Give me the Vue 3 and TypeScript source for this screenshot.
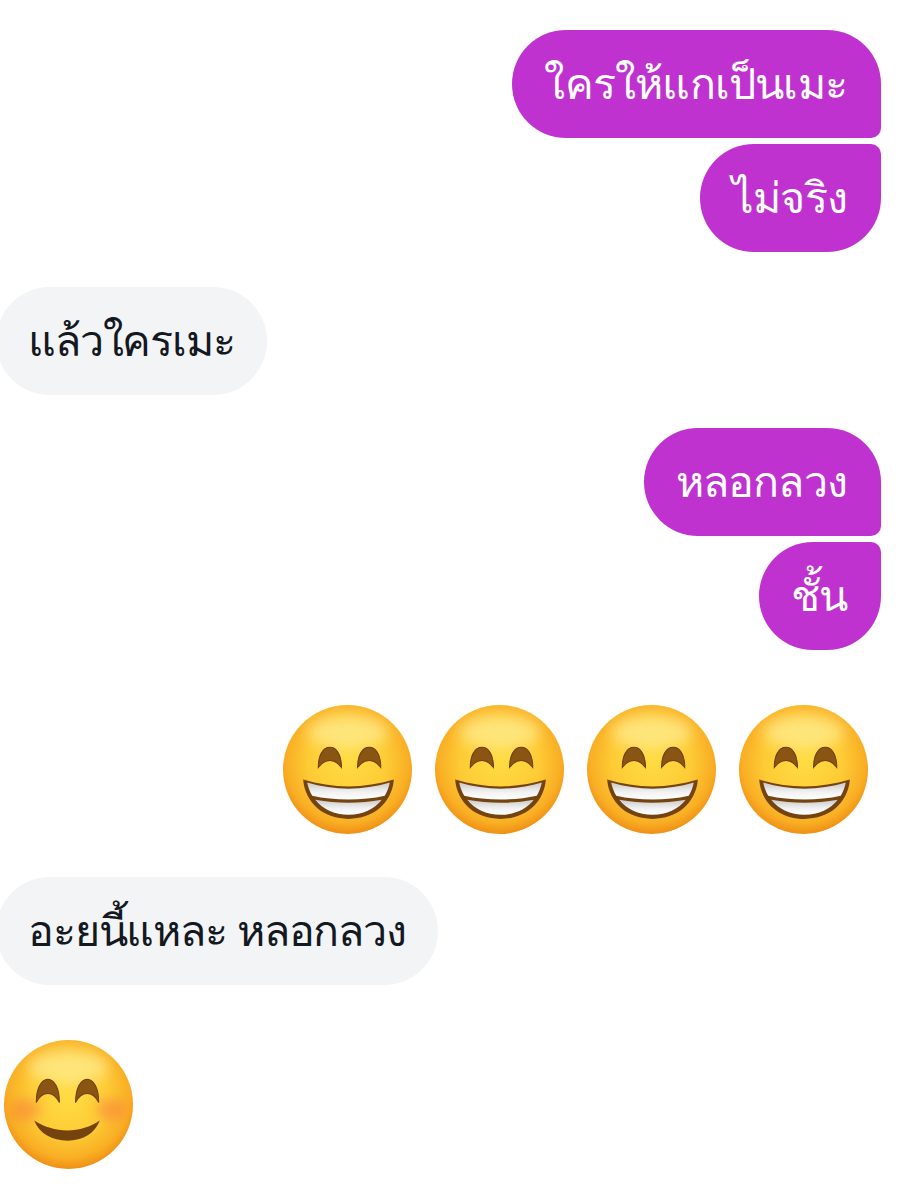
<script setup lang="ts">
type Row =
  | { kind: 'text'; side: 'me' | 'them'; text: string; shape?: 'first' | 'last' }
  | { kind: 'emoji'; side: 'me' | 'them'; face: 'grin' | 'smile'; count: number }

const rows: Row[] = [
  { kind: 'text', side: 'me', text: 'ใครให้แกเป็นเมะ', shape: 'first' },
  { kind: 'text', side: 'me', text: 'ไม่จริง', shape: 'last' },
  { kind: 'text', side: 'them', text: 'แล้วใครเมะ' },
  { kind: 'text', side: 'me', text: 'หลอกลวง', shape: 'first' },
  { kind: 'text', side: 'me', text: 'ชั้น', shape: 'last' },
  { kind: 'emoji', side: 'me', face: 'grin', count: 4 },
  { kind: 'text', side: 'them', text: 'อะยนี้แหละ หลอกลวง' },
  { kind: 'emoji', side: 'them', face: 'smile', count: 1 },
]
</script>

<template>
  <div class="chat">
    <div v-for="(row, i) in rows" :key="i" class="row" :class="row.side">
      <div v-if="row.kind === 'text'" class="bubble" :class="row.shape">{{ row.text }}</div>
      <template v-else>
        <svg v-for="n in row.count" :key="n" class="face" viewBox="0 0 130 130">
          <defs>
            <radialGradient :id="`skin-${i}-${n}`" cx="50%" cy="44%" r="56%">
              <stop offset="0" stop-color="#ffdc42" />
              <stop offset="0.55" stop-color="#fdcb35" />
              <stop offset="0.85" stop-color="#f9ae24" />
              <stop offset="1" stop-color="#ef8f16" />
            </radialGradient>
            <linearGradient :id="`tooth-${i}-${n}`" x1="0" y1="0" x2="0" y2="1">
              <stop offset="0" stop-color="#c9c9c9" />
              <stop offset="0.55" stop-color="#f1f1f1" />
              <stop offset="1" stop-color="#ffffff" />
            </linearGradient>
          </defs>
          <circle cx="65" cy="65" r="64" :fill="`url(#skin-${i}-${n})`" />
          <ellipse class="shine" cx="65" cy="28" rx="40" ry="17" />
          <template v-if="row.face === 'grin'">
            <path class="eye" d="M36 63C36 50 41 43 47.5 43S59 50 59 63C56 59 52 56 47.5 56S39 59 36 63Z" />
            <path class="eye" d="M75 63C75 50 80 43 86.5 43S98 50 98 63C95 59 91 56 86.5 56S78 59 75 63Z" />
            <path class="mouth" d="M21 75C50 84 82 84 111 75C109 99 90 114 66 114S23 99 21 75Z" />
            <path :fill="`url(#tooth-${i}-${n})`" d="M25 78C52 86 80 86 107 78C106 83 104 88 102 91C80 96 52 96 30 91C28 88 26 83 25 78Z" />
            <path :fill="`url(#tooth-${i}-${n})`" d="M33 95C55 99 77 99 99 95C92 104 80 110 66 110S40 104 33 95Z" />
          </template>
          <template v-else>
            <ellipse class="blush" cx="22" cy="70" rx="15" ry="11" />
            <ellipse class="blush" cx="108" cy="70" rx="15" ry="11" />
            <path class="eye" d="M33 63C33 49 38 40 44.5 40S56 49 56 63C53 57 49 54 44.5 54S36 57 33 63Z" />
            <path class="eye" d="M72 63C72 49 77 40 83.5 40S95 49 95 63C92 57 88 54 83.5 54S75 57 72 63Z" />
            <path class="mouth" d="M31 81C50 94 78 94 96 81C91 94 79 101 64 101S36 94 31 81Z" />
          </template>
        </svg>
      </template>
    </div>
  </div>
</template>

<style scoped>
.chat {
  width: 903px;
  height: 1200px;
  box-sizing: border-box;
  padding: 30px 22px 0 0;
  display: flex;
  flex-direction: column;
  overflow: hidden;
  background: #fff;
  font-family: "Noto Sans", "DejaVu Sans", sans-serif;
}

.row {
  display: flex;
}

.me {
  justify-content: flex-end;
}

.row:nth-child(2),
.row:nth-child(5) {
  margin-top: 6px;
}

.row:nth-child(3) {
  margin-top: 35px;
}

.row:nth-child(4) {
  margin-top: 33px;
}

.row:nth-child(6) {
  margin-top: 54px;
  padding-right: 12px;
  gap: 21px;
}

.row:nth-child(7) {
  margin-top: 42px;
}

.row:nth-child(8) {
  margin-top: 54px;
  padding-left: 3px;
}

.bubble {
  height: 108px;
  box-sizing: border-box;
  display: flex;
  align-items: center;
  padding: 0 34px 0 32px;
  border-radius: 54px;
  font-size: 43px;
  letter-spacing: -0.8px;
  white-space: nowrap;
}

.me .bubble {
  background: #c032d0;
  color: #fff;
}

.them .bubble {
  margin-left: -4px;
  padding: 0 32px;
  background: #f3f4f6;
  color: #14181f;
  font-weight: 500;
  letter-spacing: -1.15px;
}

.bubble.first {
  border-bottom-right-radius: 10px;
}

.bubble.last {
  border-top-right-radius: 10px;
}

.face {
  width: 131px;
  height: 131px;
  flex: none;
}

.shine {
  fill: #fff3a6;
  opacity: 0.6;
  filter: blur(7px);
}

.eye {
  fill: #8a5413;
  stroke: #6e3f0c;
  stroke-width: 1;
}

.mouth {
  fill: #74430e;
}

.blush {
  fill: #f9803c;
  opacity: 0.55;
  filter: blur(6px);
}
</style>
